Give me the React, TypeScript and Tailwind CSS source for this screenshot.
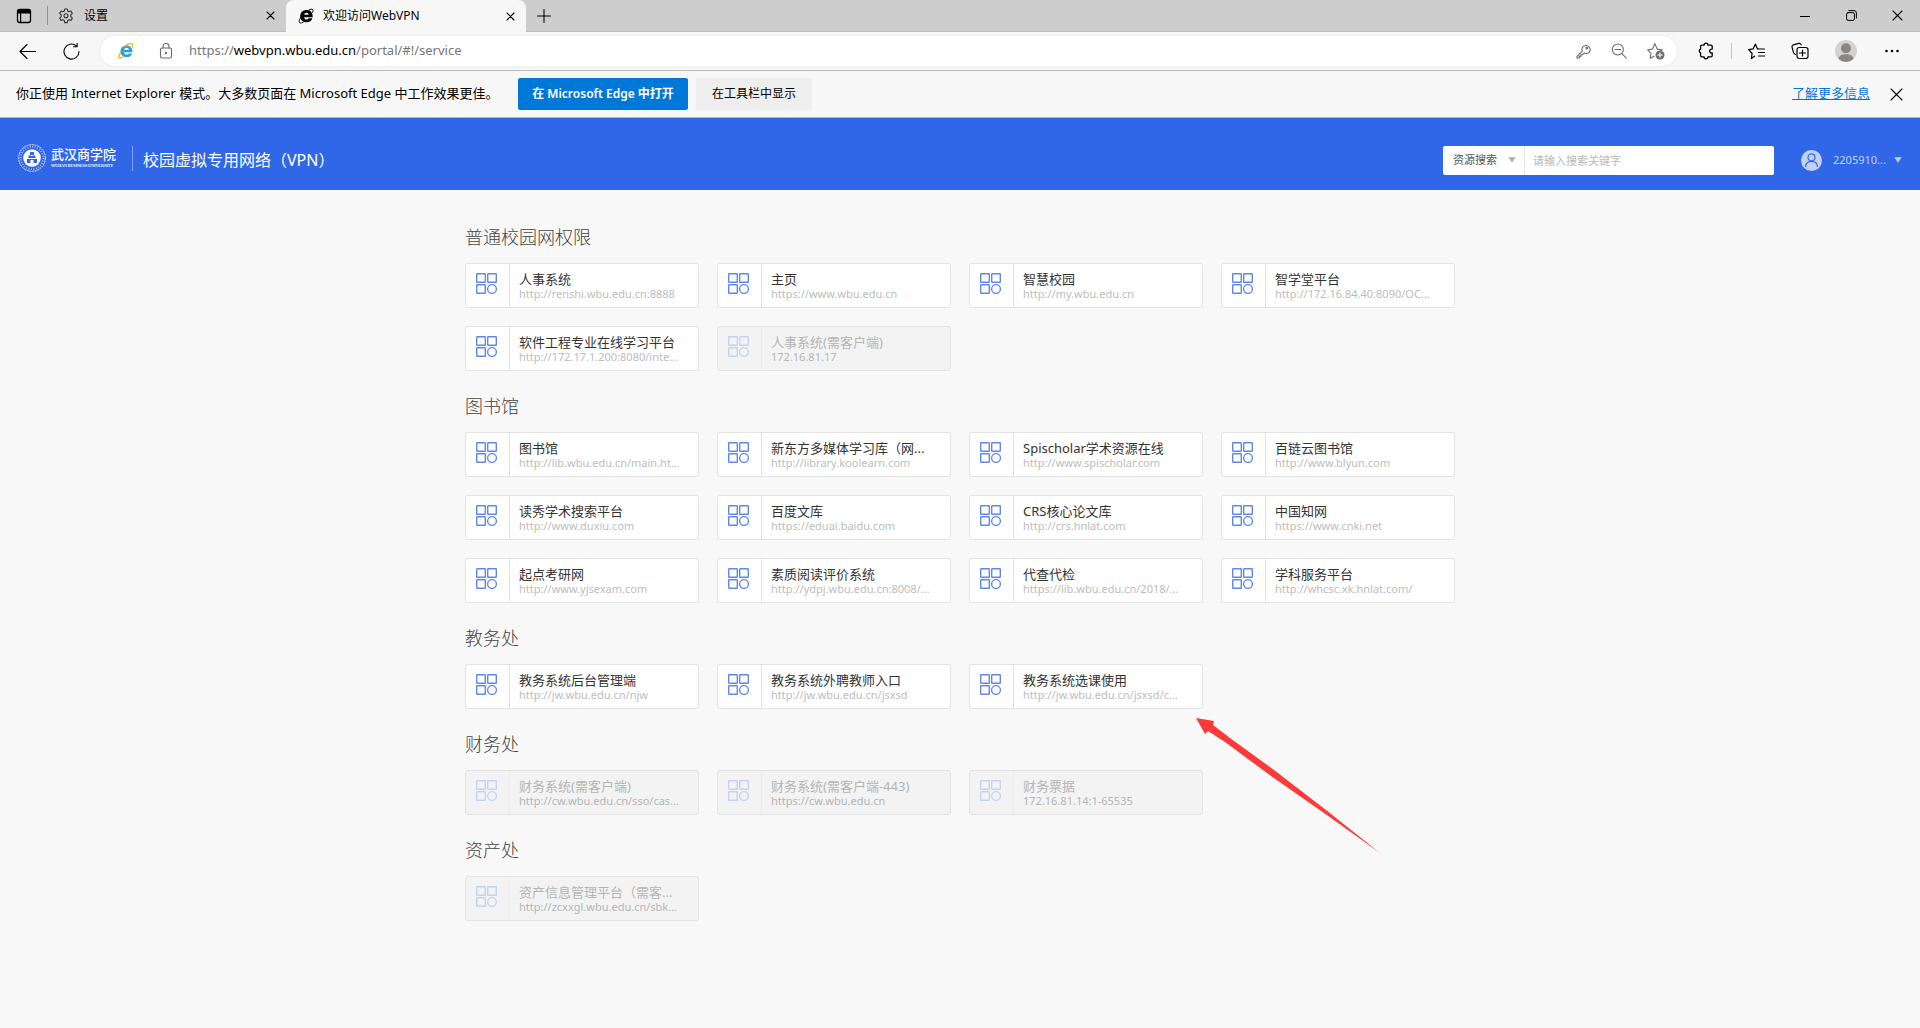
import React from "react";

type Resource = { name: string; url: string; off?: boolean; arrow?: boolean };
type Group = { title: string; items: Resource[] };

const groups: Group[] = [
  {
    title: "普通校园网权限",
    items: [
      { name: "人事系统", url: "http://renshi.wbu.edu.cn:8888" },
      { name: "主页", url: "https://www.wbu.edu.cn" },
      { name: "智慧校园", url: "http://my.wbu.edu.cn" },
      { name: "智学堂平台", url: "http://172.16.84.40:8090/OC..." },
      { name: "软件工程专业在线学习平台", url: "http://172.17.1.200:8080/inte..." },
      { name: "人事系统(需客户端)", url: "172.16.81.17", off: true },
    ],
  },
  {
    title: "图书馆",
    items: [
      { name: "图书馆", url: "http://lib.wbu.edu.cn/main.ht..." },
      { name: "新东方多媒体学习库（网...", url: "http://library.koolearn.com" },
      { name: "Spischolar学术资源在线", url: "http://www.spischolar.com" },
      { name: "百链云图书馆", url: "http://www.blyun.com" },
      { name: "读秀学术搜索平台", url: "http://www.duxiu.com" },
      { name: "百度文库", url: "https://eduai.baidu.com" },
      { name: "CRS核心论文库", url: "http://crs.hnlat.com" },
      { name: "中国知网", url: "https://www.cnki.net" },
      { name: "起点考研网", url: "http://www.yjsexam.com" },
      { name: "素质阅读评价系统", url: "http://ydpj.wbu.edu.cn:8008/..." },
      { name: "代查代检", url: "https://lib.wbu.edu.cn/2018/..." },
      { name: "学科服务平台", url: "http://whcsc.xk.hnlat.com/" },
    ],
  },
  {
    title: "教务处",
    items: [
      { name: "教务系统后台管理端", url: "http://jw.wbu.edu.cn/njw" },
      { name: "教务系统外聘教师入口", url: "http://jw.wbu.edu.cn/jsxsd" },
      { name: "教务系统选课使用", url: "http://jw.wbu.edu.cn/jsxsd/c...", arrow: true },
    ],
  },
  {
    title: "财务处",
    items: [
      { name: "财务系统(需客户端)", url: "http://cw.wbu.edu.cn/sso/cas...", off: true },
      { name: "财务系统(需客户端-443)", url: "https://cw.wbu.edu.cn", off: true },
      { name: "财务票据", url: "172.16.81.14:1-65535", off: true },
    ],
  },
  {
    title: "资产处",
    items: [{ name: "资产信息管理平台（需客...", url: "http://zcxxgl.wbu.edu.cn/sbk...", off: true }],
  },
];

function Svg({ size = 16, className = "", children }: { size?: number; className?: string; children: React.ReactNode }) {
  return (
    <svg
      width={size}
      height={size}
      viewBox={`0 0 ${size} ${size}`}
      fill="none"
      stroke="currentColor"
      strokeWidth="1.1"
      strokeLinecap="round"
      strokeLinejoin="round"
      aria-hidden="true"
      className={`shrink-0 ${className}`}
    >
      {children}
    </svg>
  );
}

const Cross = ({ size }: { size: number }) => (
  <Svg size={size}>
    <path d={`M1 1L${size - 1} ${size - 1}M${size - 1} 1L1 ${size - 1}`} />
  </Svg>
);

const Caret = ({ className }: { className: string }) => (
  <svg width="8" height="6" viewBox="0 0 8 6" aria-hidden="true" className={className}>
    <path d="M0.3 0.3h7.4L4 5.7z" fill="currentColor" />
  </svg>
);

function TabBar() {
  return (
    <div className="flex h-8 items-stretch border-b border-[#bdbdbd] bg-[#cdcdcd]">
      <button aria-label="标签页操作菜单" className="flex w-[47px] items-center justify-center">
        <Svg size={16}>
          <rect x="1.5" y="1.5" width="13" height="13" rx="2.2" strokeWidth="1.3" />
          <path d="M1.5 5V3.5a2 2 0 0 1 2-2h9a2 2 0 0 1 2 2V5z" fill="currentColor" />
          <path d="M4.6 5v9.5" strokeWidth="1.2" />
        </Svg>
      </button>
      <div className="my-1.5 w-px bg-[#8f8f8f]" />
      <div className="flex w-[238px] items-center pl-2.5 pr-2">
        <Svg size={16} className="text-[#333]">
          <path d="M6.700 1h2.600l.4 2 1.300.7 1.900-.7 1.400 2.300-1.500 1.500v1.800l1.500 1.500-1.400 2.300-1.900-.7-1.300.7-.4 2.200H6.700l-.4-2.200-1.300-.7-1.900.7-1.400-2.300 1.500-1.500V6.800L1.700 5.300 3.100 3l1.900.7L6.300 3z" />
          <circle cx="8" cy="7.800" r="2" />
        </Svg>
        <span className="ml-2.5 flex-1 text-xs">设置</span>
        <button aria-label="关闭设置" className="flex size-4 items-center justify-center"><Cross size={9} /></button>
      </div>
      <div className="-mb-px flex w-60 items-center rounded-t-lg bg-[#f7f7f7] pl-3 pr-2">
        <svg width="16" height="16" viewBox="0 0 16 16" aria-hidden="true">
          <path d="M14.700 9.200H6.100c.1 1.600 1.100 2.300 2.400 2.300 1 0 1.700-.4 2.100-1.200h3.800c-.8 2.500-3 4-5.900 4-3.700 0-6.300-2.300-6.300-6s2.600-6.200 6.300-6.200c4 0 6.300 2.600 6.200 7.100zM6.200 6.800h4.500C10.600 5.500 9.700 4.800 8.500 4.800S6.400 5.500 6.200 6.800z" fill="#000" />
          <path d="M3.600 8.200C1 11.600.6 14 1.800 14.800c.9.5 2.600 0 4-1M10.500 2.200c2-1.200 3.600-1.300 4.200-.6.5.7.3 1.700-.3 3.100" fill="none" stroke="#000" strokeWidth="1" />
        </svg>
        <span className="ml-[9px] flex-1 text-xs">欢迎访问WebVPN</span>
        <button aria-label="关闭标签页" className="flex size-4 items-center justify-center"><Cross size={9} /></button>
      </div>
      <button aria-label="新建标签页" className="flex w-9 items-center justify-center">
        <Svg size={14}><path d="M7 .5v13M.5 7h13" /></Svg>
      </button>
      <div className="flex-1" />
      <button aria-label="最小化" className="flex w-[46px] items-center justify-center">
        <Svg size={10}><path d="M0 5.500h10" /></Svg>
      </button>
      <button aria-label="还原" className="flex w-[46px] items-center justify-center">
        <Svg size={11}>
          <rect x="0.600" y="2.600" width="7.800" height="7.800" rx="1.500" strokeWidth="1" />
          <path d="M2.800.6h5.200a2.400 2.400 0 0 1 2.400 2.400v5" strokeWidth="1" />
        </Svg>
      </button>
      <button aria-label="关闭" className="flex w-[46px] items-center justify-center"><Cross size={11} /></button>
    </div>
  );
}

function Toolbar() {
  return (
    <div className="flex h-[39px] items-center border-b border-[#b9b9b9] bg-[#f7f7f7] pr-[13px]">
      <button aria-label="返回" className="ml-[19px] flex">
        <Svg size={17}><path d="M16.500 8.500H1M8 1.500l-7 7 7 7" /></Svg>
      </button>
      <button aria-label="刷新" className="ml-[27px] mr-5 flex">
        <Svg size={17}><path d="M16 8.500a7.500 7.500 0 1 1-2.700-5.700M14.100.5v3.300h-3.600" /></Svg>
      </button>
      <div className="mr-5 flex h-[30px] flex-1 items-center rounded-full bg-white pl-[18px] pr-3 text-[#6b6b6b] shadow-[0_0_3px_#e2e2e2]">
        <svg width="16" height="16" viewBox="0 0 16 16" aria-hidden="true">
          <path d="M14.500 9.200H6.100c.1 1.500 1 2.300 2.400 2.300 1 0 1.600-.4 2-1h3.700c-.8 2.300-2.900 3.700-5.700 3.700-3.600 0-6-2.300-6-5.900s2.500-5.900 6-5.900c3.900 0 6.100 2.500 6 6.800zM6.200 6.900h4.600C10.700 5.500 9.800 4.800 8.500 4.800S6.400 5.600 6.200 6.900z" fill="#2b9fe3" />
          <path d="M3.100 8.800C.7 12 .5 14.200 1.500 14.800c.8.500 2.400 0 3.800-1M6 3.500c3.800-2.700 7.400-3.500 8.500-2.200.6.7.3 1.900-.3 3.300" fill="none" stroke="#f5b921" strokeWidth="1.400" />
        </svg>
        <Svg size={16} className="ml-6">
          <rect x="2.500" y="5" width="11" height="10" rx="1.500" />
          <path d="M5 5V3.500a3 3 0 0 1 6 0V5" />
          <circle cx="8" cy="10" r=".6" fill="currentColor" />
        </Svg>
        <div role="textbox" aria-label="地址栏" tabIndex={0} className="ml-[15px] flex-1 text-[13px] text-[#777]">
          https://<span className="text-black">webvpn.wbu.edu.cn</span>/portal/#!/service
        </div>
        <button aria-label="密码" className="flex">
          <Svg size={15}>
            <path d="M6.300 7.200L1 12.500V14h2.300v-1.600h1.600v-1.600h1.500L8 9.100a4.100 4.100 0 1 0-1.700-1.900z" />
            <circle cx="10.800" cy="4.200" r=".8" />
          </Svg>
        </button>
        <button aria-label="缩小" className="ml-5 flex">
          <Svg size={16}><circle cx="6.800" cy="6.500" r="5.500" /><path d="M4 6.500h5.600M10.900 10.600l4.400 4.600" /></Svg>
        </button>
        <button aria-label="添加到收藏夹" className="ml-5 flex">
          <Svg size={18}>
            <path d="M7 14.300L3.200 16.200l.8-4.900L.7 7.800l4.700-.7L7.800 1.500l2.300 5.600 4.900.7-1 1.100" />
            <circle cx="13" cy="13" r="4.500" fill="currentColor" stroke="none" />
            <path d="M13 10.700v4.600M10.700 13h4.600" stroke="#fff" />
          </Svg>
        </button>
      </div>
      <button aria-label="扩展" className="flex">
        <Svg size={18}>
          <path strokeWidth="1.300" d="M4.800 3.200H7a2 2 0 0 1 4 0h3a1.200 1.200 0 0 1 1.200 1.200v2.700h-.6a1.900 1.900 0 0 0 0 3.800h.6v2.700a1.200 1.200 0 0 1-1.200 1.200h-3a2 2 0 0 1-4 0H4.800a1.200 1.200 0 0 1-1.200-1.200v-2.700a2 2 0 0 1 0-3.800V4.400a1.200 1.200 0 0 1 1.200-1.200z" />
        </Svg>
      </button>
      <div className="ml-4 h-4 w-px bg-[#c6c6c6]" />
      <button aria-label="收藏夹" className="ml-4 flex">
        <Svg size={17}>
          <path strokeWidth="1.200" d="M6.500 13.200L3.400 15.500l.7-5L.7 6.600l4.400-.7L7.400 1l2.100 4.900h1M10.500 6h6M10.500 9.500h6M10.500 13h6" />
        </Svg>
      </button>
      <button aria-label="集锦" className="ml-[26px] flex">
        <Svg size={18}>
          <path strokeWidth="1.200" d="M4.500 12.500C2.800 12 2.600 11 2.300 9.900L1.100 5.200c-.3-1.300.2-2 1.300-2.400l5.200-1.400c1.300-.3 2 .1 2.600 1.400" />
          <rect x="6" y="5.500" width="11" height="11" rx="2.200" strokeWidth="1.200" />
          <path d="M11.500 8v6M8.500 11h6" strokeWidth="1.200" />
        </Svg>
      </button>
      <button aria-label="个人资料" className="ml-[26px] flex">
        <svg width="22" height="22" viewBox="0 0 22 22" aria-hidden="true">
          <circle cx="11" cy="11" r="11" fill="#d4d2cf" />
          <circle cx="11" cy="8.200" r="5" fill="#8a8683" />
          <path d="M3.500 19c.5-3.500 3.700-4.800 7.500-4.800s7 1.300 7.500 4.800A11 11 0 0 1 11 22a11 11 0 0 1-7.500-3z" fill="#8a8683" />
        </svg>
      </button>
      <button aria-label="设置及其他" className="ml-[27px] mr-[7px] flex">
        <svg width="16" height="4" viewBox="0 0 16 4" aria-hidden="true">
          <circle cx="2.500" cy="2" r="1.300" /><circle cx="8" cy="2" r="1.300" /><circle cx="13.500" cy="2" r="1.300" />
        </svg>
      </button>
    </div>
  );
}

function InfoBar() {
  return (
    <div className="flex h-[47px] items-center border-b border-[#b9b9b9] bg-[#f7f7f7] pl-4 pr-[17px] text-[13px]">
      <p className="w-[502px] shrink-0 whitespace-nowrap">
        你正使用 Internet Explorer 模式。大多数页面在 Microsoft Edge 中工作效果更佳。
      </p>
      <button className="h-8 w-[170px] rounded-[2px] bg-[#0078d7] text-xs font-semibold text-white">
        在 Microsoft Edge 中打开
      </button>
      <button className="ml-2 h-8 w-[116px] rounded-[2px] bg-[#eee] text-xs">在工具栏中显示</button>
      <div className="flex-1" />
      <a href="#learn" className="text-[#0078d7] underline">了解更多信息</a>
      <button aria-label="关闭通知" className="ml-5 flex"><Cross size={13} /></button>
    </div>
  );
}

function Seal() {
  return (
    <svg width="28" height="28" viewBox="0 0 28 28" aria-hidden="true" className="shrink-0">
      <circle cx="14" cy="14" r="13.300" fill="none" stroke="#fff" strokeWidth=".9" strokeDasharray="2 .7" />
      <circle cx="14" cy="14" r="11.200" fill="none" stroke="#fff" strokeWidth="1.600" strokeDasharray="1 1.500" opacity=".6" />
      <circle cx="14" cy="14" r="8.800" fill="#fff" />
      <path d="M12 8h4v3.500h1.500v3H19V19h-3.500v-3h-3v3H9v-4.500h1.500v-3H12z" fill="#3067e8" />
      <path d="M12.500 11.500h3M9 14.500h10" stroke="#fff" strokeWidth="1" />
    </svg>
  );
}

function PortalHeader() {
  return (
    <header className="flex h-[72px] items-center bg-[#3067e8] pl-[18px] pr-[18px] pt-3 text-white">
      <div className="mb-1 flex items-center">
        <Seal />
        <div className="ml-[5px] flex w-[68px] flex-col whitespace-nowrap">
          <span className="font-['Liberation_Serif','Noto_Sans_CJK_SC',serif] text-[13px] font-medium leading-4">武汉商学院</span>
          <span className="font-['Liberation_Serif',serif] text-[4px] font-bold leading-[6px]">WUHAN BUSINESS UNIVERSITY</span>
        </div>
        <div className="ml-[13px] h-[25px] w-px bg-[#7f9ff0]" />
      </div>
      <h1 className="ml-2.5 text-base">校园虚拟专用网络（VPN）</h1>
      <div className="flex-1" />
      <form className="flex h-[29px] w-[331px] items-center rounded-[2px] bg-white text-[11px]">
        <div className="relative flex h-full w-[82px] items-center border-r border-[#e4e4e4]">
          <select aria-label="搜索类型" className="h-full w-full appearance-none bg-transparent pl-2.5 text-[#555] outline-none">
            <option>资源搜索</option>
          </select>
          <Caret className="pointer-events-none absolute right-2 text-[#b0b0b0]" />
        </div>
        <input aria-label="搜索关键字" placeholder="请输入搜索关键字" className="h-full min-w-0 flex-1 pl-2 text-[#333] outline-none placeholder:text-[#b8b8b8]" />
      </form>
      <button className="ml-[27px] flex items-center text-[#c3d1f8]">
        <svg width="21" height="21" viewBox="0 0 21 21" aria-hidden="true">
          <circle cx="10.500" cy="10.500" r="10.500" fill="#c3d1f8" />
          <circle cx="10.500" cy="7.300" r="3.500" fill="none" stroke="#3067e8" strokeWidth="1.200" />
          <path d="M4.500 17c.2-3.600 2.600-5.600 6-5.600s5.800 2 6 5.600" fill="none" stroke="#3067e8" strokeWidth="1.200" />
        </svg>
        <span className="ml-[11px] w-[53px] text-left text-[11px]">2205910...</span>
        <Caret className="ml-2" />
      </button>
    </header>
  );
}

function Card({ item }: { item: Resource }) {
  return (
    <li className="relative">
      <a
        href="#service"
        aria-disabled={item.off}
        className={`flex h-[45px] rounded-[3px] border border-[#e3e3e3] ${item.off ? "bg-[#f3f3f3]" : "bg-white"}`}
      >
        <span className={`flex w-11 shrink-0 border-r pl-2.5 pt-[9px] ${item.off ? "border-[#ececec]" : "border-[#e3e3e3]"}`}>
          <svg width="21" height="21" viewBox="0 0 21 21" fill="none" stroke={item.off ? "#c5d2f6" : "#5f88ee"} strokeWidth="1.400" aria-hidden="true">
            <rect x=".7" y=".7" width="8.600" height="8.600" rx=".5" />
            <rect x="11.700" y=".7" width="8.600" height="8.600" rx=".5" />
            <rect x=".7" y="11.700" width="8.600" height="8.600" rx=".5" />
            <circle cx="16" cy="16" r="4.400" />
          </svg>
        </span>
        <span className="flex min-w-0 flex-col whitespace-nowrap pl-[9px] pt-[7px]">
          <span className={`text-[13px] leading-4 ${item.off ? "text-[#b5b5b5]" : "text-[#333]"}`}>{item.name}</span>
          <span className={`text-[11px] leading-[14px] ${item.off ? "text-[#b5b5b5]" : "text-[#bdbdbd]"}`}>{item.url}</span>
        </span>
      </a>
      {item.arrow && (
        <svg width="185" height="136" viewBox="0 0 185 136" aria-hidden="true" className="pointer-events-none absolute left-[227px] top-[54px] z-10">
          <path d="M0 0L18 3 17 7 34 20 78 52 130 92 184 135 128 95 75 58 29 24 12 13 9 16z" fill="#fc3a3a" />
        </svg>
      )}
    </li>
  );
}

export default function App() {
  return (
    <div className="flex min-h-screen flex-col bg-[#f8f8f8] font-['Noto_Sans','Noto_Sans_CJK_SC',sans-serif] text-black">
      <TabBar />
      <Toolbar />
      <InfoBar />
      <PortalHeader />
      <main className="mx-auto flex w-full max-w-[990px] flex-col gap-[22px] pt-[34px]">
        {groups.map((g) => (
          <section key={g.title}>
            <h2 className="mb-[13px] text-lg font-light leading-[26px] text-[#444]">{g.title}</h2>
            <ul className="grid grid-cols-4 gap-[18px]">
              {g.items.map((item) => (
                <Card key={item.name + item.url} item={item} />
              ))}
            </ul>
          </section>
        ))}
      </main>
    </div>
  );
}
